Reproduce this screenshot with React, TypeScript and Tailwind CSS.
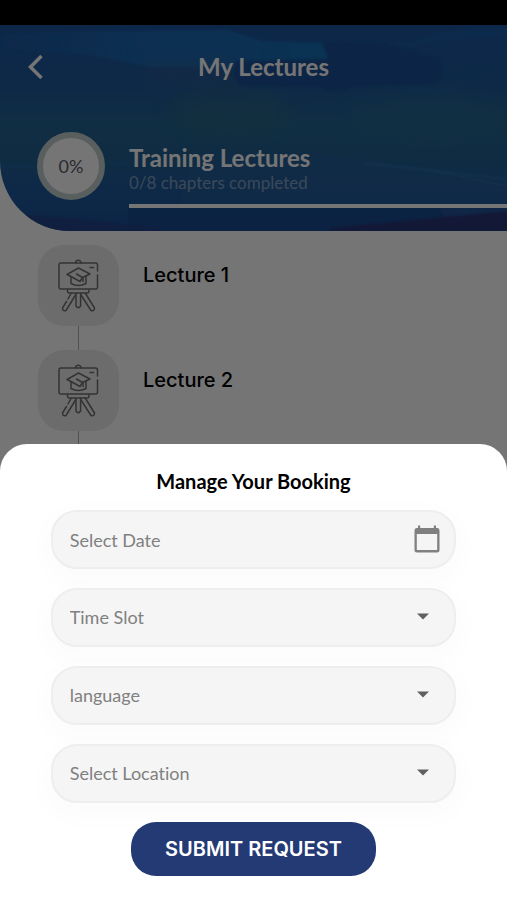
import * as React from "react"

const LECTURES = ["Lecture 1", "Lecture 2"]

const SELECTS = [
  { id: "slot", label: "Time Slot", options: ["Morning", "Afternoon"] },
  { id: "language", label: "language", options: ["English", "Arabic"] },
  { id: "location", label: "Select Location", options: ["Main Branch", "Online"] },
]

const fieldClass =
  "block h-[59px] w-full appearance-none rounded-[26px] border-2 border-[#eeeeee] bg-[#f5f5f5] pl-[17px] pr-14 font-[Lato,sans-serif] text-[18px] text-[#808080] placeholder:text-[#808080] placeholder:opacity-100 shadow-[0_8px_24px_8px_rgba(0,0,0,0.016)] outline-none [font-variant-ligatures:none]"

function HeaderArt() {
  return (
    <svg
      className="absolute inset-0 h-full w-full"
      viewBox="0 0 507 206"
      preserveAspectRatio="none"
      aria-hidden="true"
    >
      <defs>
        <linearGradient id="sky" x1="0" y1="0" x2="0" y2="1">
          <stop offset="0" stopColor="#1d559f" />
          <stop offset="0.3" stopColor="#1f5a9c" />
          <stop offset="0.48" stopColor="#246492" />
          <stop offset="0.65" stopColor="#226092" />
          <stop offset="0.8" stopColor="#1f5a9e" />
          <stop offset="1" stopColor="#1c4f98" />
        </linearGradient>
        <linearGradient id="glow" x1="0" y1="0" x2="1" y2="0">
          <stop offset="0" stopColor="#1968b0" stopOpacity="0.2" />
          <stop offset="0.5" stopColor="#1c69b4" />
          <stop offset="1" stopColor="#186eb2" />
        </linearGradient>
        <filter id="soft" x="-40%" y="-80%" width="180%" height="260%">
          <feGaussianBlur stdDeviation="9" />
        </filter>
        <filter id="edge">
          <feGaussianBlur stdDeviation="1" />
        </filter>
      </defs>
      <rect width="507" height="206" fill="url(#sky)" />
      <path
        d="M0 10 L90 6 L228 5 Q248 12 262 16 L323 18 L330 38 L240 42 L150 42 L90 30 L0 24Z"
        fill="url(#glow)"
        filter="url(#edge)"
      />
      <path d="M140 42 L235 40 L236 56 L165 58Z" fill="#386095" opacity="0.7" filter="url(#soft)" />
      <ellipse cx="230" cy="86" rx="60" ry="24" fill="#306c80" opacity="0.45" filter="url(#soft)" />
      <ellipse cx="430" cy="90" rx="80" ry="26" fill="#2a6c90" opacity="0.35" filter="url(#soft)" />
      <path
        d="M236 36 L329 34 L323 18 L385 19 L440 35 Q446 54 436 59 L352 62 L342 67 L330 67 L320 62 L241 61 Q231 54 236 36Z"
        fill="#1b4f96"
        opacity="0.9"
        filter="url(#edge)"
      />
      <path
        d="M385 19 L410 18 L432 10 L470 3 L507 3 L507 12 L440 16 L410 23Z"
        fill="#1e62a8"
        opacity="0.6"
        filter="url(#edge)"
      />
      <path d="M190 128 L330 130 L507 156 L507 178 L180 178Z" fill="#265e9c" opacity="0.6" filter="url(#edge)" />
      <path d="M365 138 L507 154" stroke="#377cb2" strokeWidth="2" opacity="0.5" filter="url(#edge)" />
      <path d="M430 145 L507 161" stroke="#3072ac" strokeWidth="1.5" opacity="0.5" />
      <path d="M0 142 L130 138" stroke="#2c6cab" strokeWidth="2" opacity="0.6" filter="url(#edge)" />
      <path d="M128 182 H507 V206 H128Z" fill="#18478e" opacity="0.6" />
      <path d="M440 183 L507 183 L507 190 L446 195Z" fill="#27569f" opacity="0.8" filter="url(#edge)" />
      <path d="M330 203 L507 186 L507 206 L330 206Z" fill="#2b3577" filter="url(#edge)" />
      <path d="M25 190 L75 194 L160 203 L160 206 L25 206Z" fill="#273f88" opacity="0.8" filter="url(#edge)" />
    </svg>
  )
}

function BoardIcon() {
  return (
    <svg
      className="h-[54px] w-[41px]"
      viewBox="0 0 41 54"
      fill="none"
      stroke="#707070"
      strokeWidth="1.5"
      strokeLinecap="round"
      strokeLinejoin="round"
      aria-hidden="true"
    >
      <path d="M17.500 4 A2.800 2.800 0 0 1 23.100 4" />
      <path d="M39.500 12 V6 Q39.500 4 37.500 4 H3 Q1 4 1 6 V28 Q1 30 3 30 H37.500 Q39.500 30 39.500 28 V16" />
      <path d="M32 8.500 H35.500" />
      <path d="M20.500 9 L32 15 L24.500 18.500 M20.500 9 L9 15.500 L12 17 L22 22.500 L24.500 18.500 L18.500 15" />
      <path d="M13 18 V24.500 Q20.500 28.500 28 24.500 V17.500" />
      <path d="M25 19 V22.500" />
      <path d="M9.500 30.500 V32 Q9.500 34 11.500 34 H29 Q31 34 31 32 V30.500" />
      <path d="M18 34.500 V47 Q20.300 50.500 22.600 47 V34.500" />
      <path d="M13 34.500 L10 40 M8.500 42.500 L4.500 49 Q4.500 52.500 8 51.500 L17.500 36" />
      <path d="M27.500 34.500 L36.500 49 Q36.500 52.500 33 51.500 L23 36" />
    </svg>
  )
}

function CalendarIcon() {
  return (
    <svg
      className="pointer-events-none absolute right-4 top-[15px] h-7 w-[26px]"
      viewBox="0 0 26 28"
      aria-hidden="true"
    >
      <path
        fill="#808080"
        fillRule="evenodd"
        d="M4 0.500h2.200v2.500h13.600v-2.500h2.200v2.500h1.500a2.500 2.500 0 0 1 2 2.500v19.500a2.500 2.500 0 0 1-2.500 2.500h-20a2.500 2.500 0 0 1-2.500-2.500v-19.500a2.500 2.500 0 0 1 2-2.500h1.500zM2.800 9v16h20.400v-16z"
      />
    </svg>
  )
}

function BookingSheet() {
  return (
    <form
      className="fixed inset-x-0 bottom-0 flex flex-col items-center rounded-t-[27px] bg-white pb-6 pt-6"
      onSubmit={(e) => e.preventDefault()}
    >
      <h2 className="text-[20px] font-bold leading-[26px] text-black">Manage Your Booking</h2>

      <div className="mt-4 flex w-4/5 flex-col gap-[19px]">
        <div className="relative">
          <input type="text" aria-label="Select Date" placeholder="Select Date" className={fieldClass} />
          <CalendarIcon />
        </div>

        {SELECTS.map((field) => (
          <div key={field.id} className="relative">
            <select id={field.id} aria-label={field.label} defaultValue="" className={fieldClass}>
              <option value="">{field.label}</option>
              {field.options.map((option) => (
                <option key={option}>{option}</option>
              ))}
            </select>
            <svg
              className="pointer-events-none absolute right-[27px] top-[25px] h-[7px] w-3"
              viewBox="0 0 12 7"
              aria-hidden="true"
            >
              <path d="M0 0.500 H12 L6 6.500Z" fill="#606060" />
            </svg>
          </div>
        ))}
      </div>

      <button
        type="submit"
        className="mt-[19px] h-[54px] rounded-[25px] bg-[#243a75] px-[34px] font-[Inter,sans-serif] text-[20px] font-semibold text-white"
      >
        SUBMIT REQUEST
      </button>
    </form>
  )
}

export default function App() {
  return (
    <div className="flex h-screen flex-col overflow-hidden bg-white font-[Lato,sans-serif]">
      <div className="h-[25px] shrink-0 bg-black" />

      <header className="relative h-[206px] shrink-0 overflow-hidden rounded-bl-[70px]">
        <HeaderArt />
        <div className="relative flex h-full flex-col">
          <div className="mt-6 grid grid-cols-[1fr_auto_1fr] items-center pl-7 pr-2">
            <button type="button" aria-label="Back" className="w-4">
              <svg className="h-6 w-4" viewBox="0 0 16 24" fill="none" stroke="#fff" strokeWidth="3.5" aria-hidden="true">
                <path d="M13.500 1 L2.500 12 L13.500 23" />
              </svg>
            </button>
            <h1 className="text-[24px] font-bold leading-9 text-white">My Lectures</h1>
          </div>

          <div className="mt-9 flex items-start pl-[37px]">
            <div className="mt-[11px] flex size-[68px] shrink-0 items-center justify-center rounded-full border-[6px] border-[#c3cfcf] bg-white text-[18px] text-[#5c5c6a]">
              0%
            </div>
            <div className="ml-6 mt-[23px] flex-1">
              <h2 className="text-[24px] font-bold leading-7 text-white">Training Lectures</h2>
              <p className="text-[17px] leading-[22px] text-[#809fc0]">0/8 chapters completed</p>
              <div className="mt-[10px] h-1 bg-white" />
            </div>
          </div>
        </div>
      </header>

      <ul className="mt-[14px] pl-[38px] font-[Inter,sans-serif]">
        {LECTURES.map((lecture) => (
          <li key={lecture} className="flex gap-6">
            <div className="flex w-[81px] flex-col items-center">
              <div className="flex h-[81px] w-full items-center justify-center rounded-[26px] bg-[#ebebeb]">
                <BoardIcon />
              </div>
              <div className="h-6 w-px bg-[#b4b4b4]" />
            </div>
            <span className="mt-4 text-[20px] font-medium leading-7 text-black">{lecture}</span>
          </li>
        ))}
      </ul>

      <div className="fixed inset-0 bg-black/54" />
      <BookingSheet />
    </div>
  )
}
